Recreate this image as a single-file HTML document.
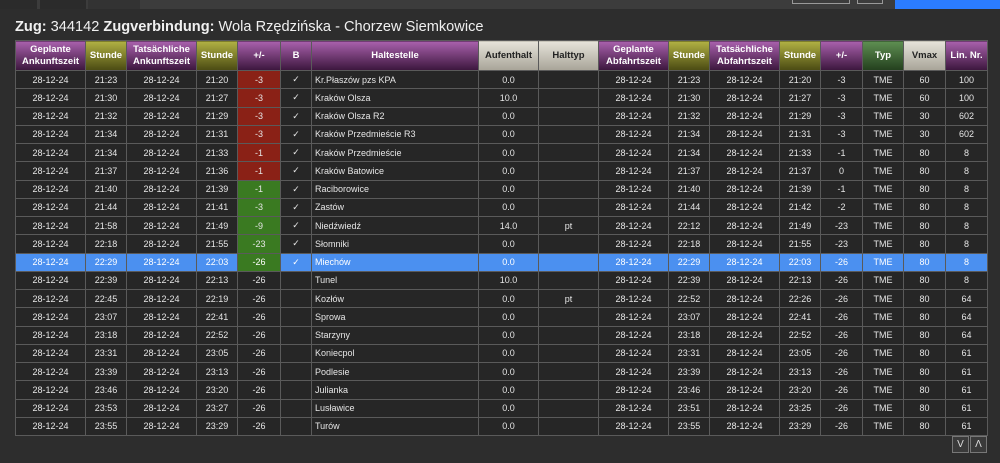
<!DOCTYPE html>
<html><head><meta charset="utf-8"><style>
*{margin:0;padding:0;box-sizing:border-box}
body{width:1000px;height:463px;background:#2d2d2d;font-family:"Liberation Sans",Arial,sans-serif;color:#e8e8e8;overflow:hidden;position:relative}
.top{position:absolute;left:0;top:0;width:1000px;height:9px;background:#3c3c3c}
.tab{position:absolute;top:0;height:9px;background:#2b2b2b}
h1{position:absolute;left:15px;top:19px;font-size:14.6px;font-weight:normal;color:#f0f0f0;white-space:nowrap}
h1 b{font-weight:bold}
table{position:absolute;left:15px;top:40px;width:972px;border-collapse:collapse;table-layout:fixed}
td,th{border:1px solid #5a5a5a;text-align:center;font-size:9px;overflow:hidden;white-space:nowrap}
th{height:30px;font-weight:bold;color:#fff;line-height:12px;font-size:9.5px}
th.p{background:linear-gradient(#a961ad,#3b163c)}
th.o{background:linear-gradient(#b1b143,#4a4a12)}
th.g{background:linear-gradient(#e6e3da,#a8a498);color:#222}
th.gr{background:linear-gradient(#5e8f52,#233f1d)}
td{height:18.25px;background:#262626;color:#e6e6e6}
td.l{text-align:left;padding-left:3px}
td.r{background:#8a2116}
td.n{background:#3a7a21}
tr.h td{background:#4b90f0;color:#fff}
tr.h td.n{background:#3a7a21}
.btn{position:absolute;top:436px;width:17px;height:17px;border:1px solid #777;background:#3a3a3a;color:#ddd;font-size:10px;text-align:center;line-height:15px}
</style></head><body>
<div class="top"></div>
<div class="tab" style="left:0;width:37px"></div>
<div class="tab" style="left:40px;width:46px"></div>
<div class="tab" style="left:88px;width:52px;background:#333"></div>
<div style="position:absolute;left:792px;top:0;width:58px;height:4px;border:1px solid #999;border-top:none"></div>
<div style="position:absolute;left:857px;top:0;width:26px;height:4px;border:1px solid #999;border-top:none"></div>
<div style="position:absolute;left:895px;top:0;width:105px;height:9px;background:#2b7cff"></div>
<h1><b>Zug:</b> 344142 <b>Zugverbindung:</b> Wola Rzędzińska - Chorzew Siemkowice</h1>
<table>
<colgroup><col style="width:70px"><col style="width:41px"><col style="width:70px"><col style="width:41px"><col style="width:43px"><col style="width:31px"><col style="width:167px"><col style="width:60px"><col style="width:60px"><col style="width:70px"><col style="width:41px"><col style="width:70px"><col style="width:41px"><col style="width:42px"><col style="width:41px"><col style="width:42px"><col style="width:42px"></colgroup>
<tr><th class="p">Geplante<br>Ankunftszeit</th><th class="o">Stunde</th><th class="p">Tatsächliche<br>Ankunftszeit</th><th class="o">Stunde</th><th class="p">+/-</th><th class="p">B</th><th class="p">Haltestelle</th><th class="g">Aufenthalt</th><th class="g">Halttyp</th><th class="p">Geplante<br>Abfahrtszeit</th><th class="o">Stunde</th><th class="p">Tatsächliche<br>Abfahrtszeit</th><th class="o">Stunde</th><th class="p">+/-</th><th class="gr">Typ</th><th class="g">Vmax</th><th class="p">Lin. Nr.</th></tr>
<tr><td>28-12-24</td><td>21:23</td><td>28-12-24</td><td>21:20</td><td class="r">-3</td><td>✓</td><td class="l">Kr.Płaszów pzs KPA</td><td>0.0</td><td></td><td>28-12-24</td><td>21:23</td><td>28-12-24</td><td>21:20</td><td>-3</td><td>TME</td><td>60</td><td>100</td></tr>
<tr><td>28-12-24</td><td>21:30</td><td>28-12-24</td><td>21:27</td><td class="r">-3</td><td>✓</td><td class="l">Kraków Olsza</td><td>10.0</td><td></td><td>28-12-24</td><td>21:30</td><td>28-12-24</td><td>21:27</td><td>-3</td><td>TME</td><td>60</td><td>100</td></tr>
<tr><td>28-12-24</td><td>21:32</td><td>28-12-24</td><td>21:29</td><td class="r">-3</td><td>✓</td><td class="l">Kraków Olsza R2</td><td>0.0</td><td></td><td>28-12-24</td><td>21:32</td><td>28-12-24</td><td>21:29</td><td>-3</td><td>TME</td><td>30</td><td>602</td></tr>
<tr><td>28-12-24</td><td>21:34</td><td>28-12-24</td><td>21:31</td><td class="r">-3</td><td>✓</td><td class="l">Kraków Przedmieście R3</td><td>0.0</td><td></td><td>28-12-24</td><td>21:34</td><td>28-12-24</td><td>21:31</td><td>-3</td><td>TME</td><td>30</td><td>602</td></tr>
<tr><td>28-12-24</td><td>21:34</td><td>28-12-24</td><td>21:33</td><td class="r">-1</td><td>✓</td><td class="l">Kraków Przedmieście</td><td>0.0</td><td></td><td>28-12-24</td><td>21:34</td><td>28-12-24</td><td>21:33</td><td>-1</td><td>TME</td><td>80</td><td>8</td></tr>
<tr><td>28-12-24</td><td>21:37</td><td>28-12-24</td><td>21:36</td><td class="r">-1</td><td>✓</td><td class="l">Kraków Batowice</td><td>0.0</td><td></td><td>28-12-24</td><td>21:37</td><td>28-12-24</td><td>21:37</td><td>0</td><td>TME</td><td>80</td><td>8</td></tr>
<tr><td>28-12-24</td><td>21:40</td><td>28-12-24</td><td>21:39</td><td class="n">-1</td><td>✓</td><td class="l">Raciborowice</td><td>0.0</td><td></td><td>28-12-24</td><td>21:40</td><td>28-12-24</td><td>21:39</td><td>-1</td><td>TME</td><td>80</td><td>8</td></tr>
<tr><td>28-12-24</td><td>21:44</td><td>28-12-24</td><td>21:41</td><td class="n">-3</td><td>✓</td><td class="l">Zastów</td><td>0.0</td><td></td><td>28-12-24</td><td>21:44</td><td>28-12-24</td><td>21:42</td><td>-2</td><td>TME</td><td>80</td><td>8</td></tr>
<tr><td>28-12-24</td><td>21:58</td><td>28-12-24</td><td>21:49</td><td class="n">-9</td><td>✓</td><td class="l">Niedźwiedź</td><td>14.0</td><td>pt</td><td>28-12-24</td><td>22:12</td><td>28-12-24</td><td>21:49</td><td>-23</td><td>TME</td><td>80</td><td>8</td></tr>
<tr><td>28-12-24</td><td>22:18</td><td>28-12-24</td><td>21:55</td><td class="n">-23</td><td>✓</td><td class="l">Słomniki</td><td>0.0</td><td></td><td>28-12-24</td><td>22:18</td><td>28-12-24</td><td>21:55</td><td>-23</td><td>TME</td><td>80</td><td>8</td></tr>
<tr class="h"><td>28-12-24</td><td>22:29</td><td>28-12-24</td><td>22:03</td><td class="n">-26</td><td>✓</td><td class="l">Miechów</td><td>0.0</td><td></td><td>28-12-24</td><td>22:29</td><td>28-12-24</td><td>22:03</td><td>-26</td><td>TME</td><td>80</td><td>8</td></tr>
<tr><td>28-12-24</td><td>22:39</td><td>28-12-24</td><td>22:13</td><td>-26</td><td></td><td class="l">Tunel</td><td>10.0</td><td></td><td>28-12-24</td><td>22:39</td><td>28-12-24</td><td>22:13</td><td>-26</td><td>TME</td><td>80</td><td>8</td></tr>
<tr><td>28-12-24</td><td>22:45</td><td>28-12-24</td><td>22:19</td><td>-26</td><td></td><td class="l">Kozłów</td><td>0.0</td><td>pt</td><td>28-12-24</td><td>22:52</td><td>28-12-24</td><td>22:26</td><td>-26</td><td>TME</td><td>80</td><td>64</td></tr>
<tr><td>28-12-24</td><td>23:07</td><td>28-12-24</td><td>22:41</td><td>-26</td><td></td><td class="l">Sprowa</td><td>0.0</td><td></td><td>28-12-24</td><td>23:07</td><td>28-12-24</td><td>22:41</td><td>-26</td><td>TME</td><td>80</td><td>64</td></tr>
<tr><td>28-12-24</td><td>23:18</td><td>28-12-24</td><td>22:52</td><td>-26</td><td></td><td class="l">Starzyny</td><td>0.0</td><td></td><td>28-12-24</td><td>23:18</td><td>28-12-24</td><td>22:52</td><td>-26</td><td>TME</td><td>80</td><td>64</td></tr>
<tr><td>28-12-24</td><td>23:31</td><td>28-12-24</td><td>23:05</td><td>-26</td><td></td><td class="l">Koniecpol</td><td>0.0</td><td></td><td>28-12-24</td><td>23:31</td><td>28-12-24</td><td>23:05</td><td>-26</td><td>TME</td><td>80</td><td>61</td></tr>
<tr><td>28-12-24</td><td>23:39</td><td>28-12-24</td><td>23:13</td><td>-26</td><td></td><td class="l">Podlesie</td><td>0.0</td><td></td><td>28-12-24</td><td>23:39</td><td>28-12-24</td><td>23:13</td><td>-26</td><td>TME</td><td>80</td><td>61</td></tr>
<tr><td>28-12-24</td><td>23:46</td><td>28-12-24</td><td>23:20</td><td>-26</td><td></td><td class="l">Julianka</td><td>0.0</td><td></td><td>28-12-24</td><td>23:46</td><td>28-12-24</td><td>23:20</td><td>-26</td><td>TME</td><td>80</td><td>61</td></tr>
<tr><td>28-12-24</td><td>23:53</td><td>28-12-24</td><td>23:27</td><td>-26</td><td></td><td class="l">Lusławice</td><td>0.0</td><td></td><td>28-12-24</td><td>23:51</td><td>28-12-24</td><td>23:25</td><td>-26</td><td>TME</td><td>80</td><td>61</td></tr>
<tr><td>28-12-24</td><td>23:55</td><td>28-12-24</td><td>23:29</td><td>-26</td><td></td><td class="l">Turów</td><td>0.0</td><td></td><td>28-12-24</td><td>23:55</td><td>28-12-24</td><td>23:29</td><td>-26</td><td>TME</td><td>80</td><td>61</td></tr>
</table>
<div class="btn" style="left:952px">V</div>
<div class="btn" style="left:970px">Λ</div>
</body></html>
